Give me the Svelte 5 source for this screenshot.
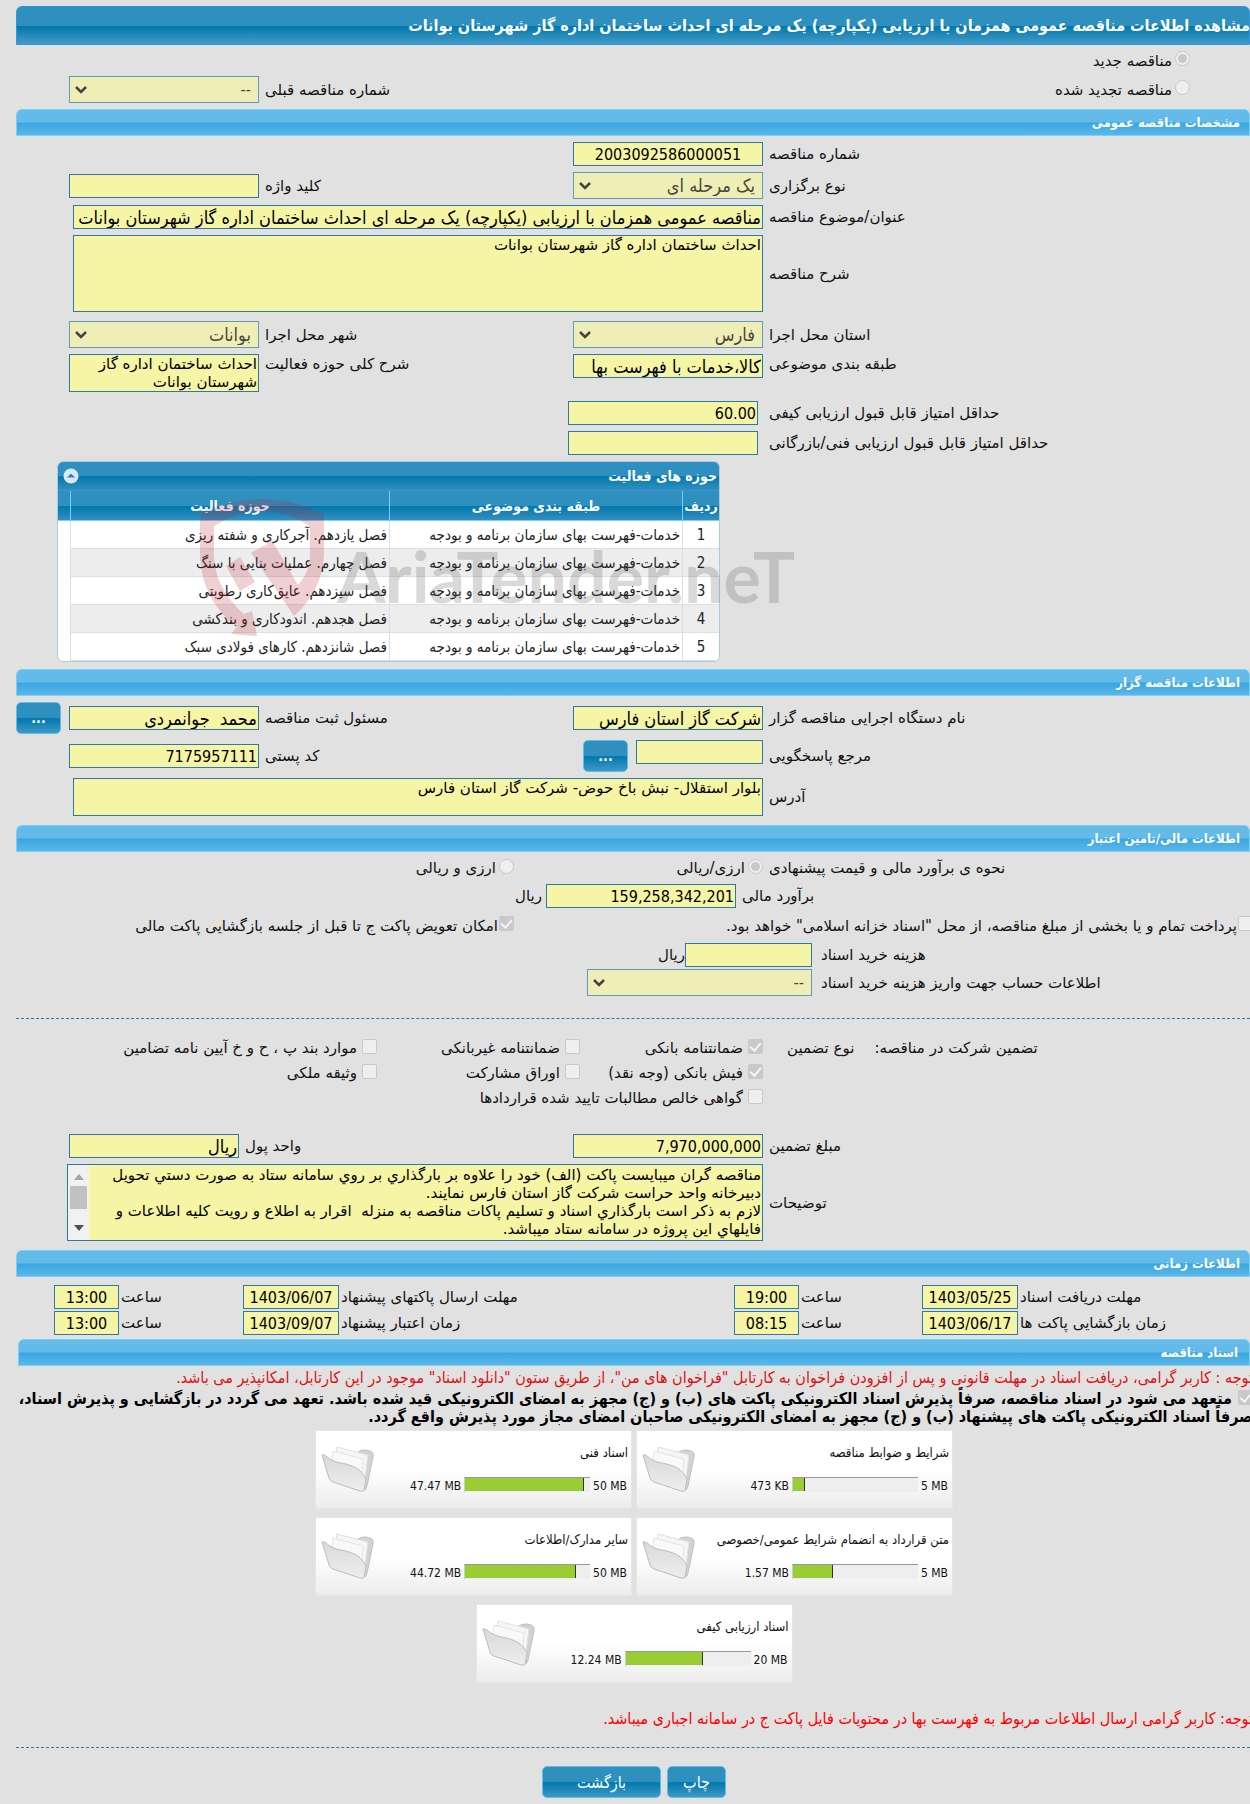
<script>
  let tenderKind = 'new';
  let currencyKind = 'rial';
  let collapsed = false;

  const activities = [
    'فصل یازدهم. آجرکاری و شفته ریزی',
    'فصل چهارم. عملیات بنایی با سنگ',
    'فصل سیزدهم. عایق‌کاری رطوبتی',
    'فصل هجدهم. اندودکاری و بندکشی',
    'فصل شانزدهم. کارهای فولادی سبک'
  ];

  const times = [
    {
      id: 'docs', label: 'مهلت دریافت اسناد', date: '1403/05/25', time: '19:00',
      id2: 'send', label2: 'مهلت ارسال پاکتهای پیشنهاد', date2: '1403/06/07', time2: '13:00'
    },
    {
      id: 'open', label: 'زمان بازگشایی پاکت ها', date: '1403/06/17', time: '08:15',
      id2: 'valid', label2: 'زمان اعتبار پیشنهاد', date2: '1403/09/07', time2: '13:00'
    }
  ];

  const guarantees = [
    { label: 'ضمانتنامه بانکی', checked: true },
    { label: 'ضمانتنامه غیربانکی', checked: false },
    { label: 'موارد بند پ ، ح و خ آیین نامه تضامین', checked: false },
    { label: 'فیش بانکی (وجه نقد)', checked: true },
    { label: 'اوراق مشارکت', checked: false },
    { label: 'وثیقه ملکی', checked: false },
    { label: 'گواهی خالص مطالبات تایید شده قراردادها', checked: false, wide: true }
  ];

  const files = [
    { title: 'شرایط و ضوابط مناقصه', max: '5 MB', used: '473 KB', percent: 10 },
    { title: 'اسناد فنی', max: '50 MB', used: '47.47 MB', percent: 95 },
    { title: 'متن قرارداد به انضمام شرایط عمومی/خصوصی', max: '5 MB', used: '1.57 MB', percent: 32 },
    { title: 'سایر مدارک/اطلاعات', max: '50 MB', used: '44.72 MB', percent: 89 },
    { title: 'اسناد ارزیابی کیفی', max: '20 MB', used: '12.24 MB', percent: 62 }
  ];

  const description = 'احداث ساختمان اداره گاز شهرستان بوانات';
  const address = 'بلوار استقلال- نبش باخ حوض- شرکت گاز استان فارس';
  const notes = `مناقصه گران میبایست پاکت (الف) خود را علاوه بر بارگذاري بر روي سامانه ستاد به صورت دستي تحویل دبیرخانه واحد حراست شرکت گاز استان فارس نمایند.
لازم به ذکر است بارگذاري اسناد و تسلیم پاکات مناقصه به منزله  اقرار به اطلاع و رویت کلیه اطلاعات و فایلهاي این پروژه در سامانه ستاد میباشد.`;
</script>

<div class="page" dir="rtl">
  <h1 class="title-bar"><span>مشاهده اطلاعات مناقصه عمومی همزمان با ارزیابی (یکپارچه) یک مرحله ای احداث ساختمان اداره گاز شهرستان بوانات</span></h1>

  <section class="body">
    <div class="row kind">
      <label class="option"><input type="radio" value="new" bind:group={tenderKind} disabled />مناقصه جدید</label>
    </div>
    <div class="row cols">
      <div class="kind">
        <label class="option"><input type="radio" value="renewed" bind:group={tenderKind} disabled />مناقصه تجدید شده</label>
      </div>
      <label class="lbl" for="prev-number">شماره مناقصه قبلی</label>
      <div><select id="prev-number" class="field" disabled><option>--</option></select></div>
    </div>
  </section>

  <h2 class="section-bar">مشخصات مناقصه عمومی</h2>
  <section class="body">
    <div class="row cols">
      <label class="lbl" for="number">شماره مناقصه</label>
      <div><input id="number" class="field center" value="2003092586000051" readonly /></div>
    </div>
    <div class="row cols">
      <label class="lbl" for="stage">نوع برگزاری</label>
      <div class="pair">
        <select id="stage" class="field persian" disabled><option>یک مرحله ای</option></select>
        <label class="lbl" for="keyword">کلید واژه</label>
      </div>
      <div><input id="keyword" class="field" readonly /></div>
    </div>
    <div class="row cols">
      <label class="lbl" for="subject">عنوان/موضوع مناقصه</label>
      <div class="wide"><input id="subject" class="field full persian" value="مناقصه عمومی همزمان با ارزیابی (یکپارچه) یک مرحله ای احداث ساختمان اداره گاز شهرستان بوانات" readonly /></div>
    </div>
    <div class="row cols after">
      <label class="lbl" for="description">شرح مناقصه</label>
      <div class="wide"><textarea id="description" class="field full tall" value={description} readonly></textarea></div>
    </div>
    <div class="row cols">
      <label class="lbl" for="province">استان محل اجرا</label>
      <div class="pair">
        <select id="province" class="field persian" disabled><option>فارس</option></select>
        <label class="lbl" for="city">شهر محل اجرا</label>
      </div>
      <div><select id="city" class="field persian" disabled><option>بوانات</option></select></div>
    </div>
    <div class="row cols top after">
      <label class="lbl" for="category">طبقه بندی موضوعی</label>
      <div class="pair">
        <input id="category" class="field persian" value="کالا،خدمات با فهرست بها" readonly />
        <label class="lbl" for="activity">شرح کلی حوزه فعالیت</label>
      </div>
      <div><textarea id="activity" class="field short" value={description} readonly></textarea></div>
    </div>
    <div class="row cols score">
      <label class="lbl" for="quality">حداقل امتیاز قابل قبول ارزیابی کیفی</label>
      <div><input id="quality" class="field" value="60.00" readonly /></div>
    </div>
    <div class="row cols score">
      <label class="lbl" for="technical">حداقل امتیاز قابل قبول ارزیابی فنی/بازرگانی</label>
      <div><input id="technical" class="field" readonly /></div>
    </div>

    <div class="grid-box">
      <div class="grid-title">
        <span>حوزه های فعالیت</span>
        <button class="collapse" aria-label="حوزه های فعالیت" on:click={() => (collapsed = !collapsed)}>
          <svg viewBox="0 0 16 16"><circle cx="8" cy="8" r="7.5" fill="#d9e8f5" /><path d="M4 9.5 8 5.5 12 9.5z" fill="#2a7fb5" /></svg>
        </button>
      </div>
      {#if !collapsed}
        <table>
          <thead>
            <tr><th class="num">ردیف</th><th>طبقه بندی موضوعی</th><th class="act">حوزه فعالیت</th><th class="rest"></th></tr>
          </thead>
          <tbody>
            {#each activities as activity, i}
              <tr>
                <td class="num">{i + 1}</td>
                <td>خدمات-فهرست بهای سازمان برنامه و بودجه</td>
                <td>{activity}</td>
                <td class="rest"></td>
              </tr>
            {/each}
          </tbody>
        </table>
      {/if}
      <!-- Watermark over the grid -->
      <svg class="watermark" viewBox="0 0 610 150" aria-hidden="true">
        <g fill="rgba(190, 32, 48, 0.21)">
          <path d="M0 14Q62 -16 124 14V52C124 78 112 100 94 116L51 53 65 45 69 51 66 46 70 37 98 85C106 76 110 66 110 54V26Q62 -4 14 26V54C14 78 26 98 44 114L52 111 57 136 31 134 37 127C14 110 0 84 0 52Z" />
          <path d="M26 66 40 57 55 82 40 91Z" />
        </g>
        <text x="137" y="103">AriaTender.neT</text>
      </svg>
    </div>
  </section>

  <h2 class="section-bar">اطلاعات مناقصه گزار</h2>
  <section class="body">
    <div class="row cols">
      <label class="lbl" for="agency">نام دستگاه اجرایی مناقصه گزار</label>
      <div class="pair">
        <input id="agency" class="field persian" value="شرکت گاز استان فارس" readonly />
        <label class="lbl" for="registrar">مسئول ثبت مناقصه</label>
      </div>
      <div class="with-button">
        <input id="registrar" class="field persian" value="محمد  جوانمردی" readonly />
        <button class="btn dots">...</button>
      </div>
    </div>
    <div class="row cols">
      <label class="lbl" for="contact">مرجع پاسخگویی</label>
      <div class="pair">
        <div class="with-button top">
          <input id="contact" class="field small" readonly />
          <button class="btn dots">...</button>
        </div>
        <label class="lbl" for="postal">کد پستی</label>
      </div>
      <div><input id="postal" class="field" value="7175957111" readonly /></div>
    </div>
    <div class="row cols after">
      <label class="lbl" for="address">آدرس</label>
      <div class="wide"><textarea id="address" class="field full short" value={address} readonly></textarea></div>
    </div>
  </section>

  <h2 class="section-bar">اطلاعات مالی/تامین اعتبار</h2>
  <section class="body">
    <div class="row cols line">
      <span class="lbl">نحوه ی برآورد مالی و قیمت پیشنهادی</span>
      <div class="halves">
        <label class="option"><input type="radio" value="rial" bind:group={currencyKind} disabled />ارزی/ریالی</label>
        <label class="option"><input type="radio" value="both" bind:group={currencyKind} disabled />ارزی و ریالی</label>
      </div>
    </div>
    <div class="row estimate">
      <label class="lbl" for="estimate">برآورد مالی</label>
      <div class="with-unit gap"><input id="estimate" class="field" value="159,258,342,201" readonly /><span>ریال</span></div>
    </div>
    <div class="row payment line">
      <label class="option bleed"><input type="checkbox" disabled />پرداخت تمام و یا بخشی از مبلغ مناقصه، از محل "اسناد خزانه اسلامی" خواهد بود.</label>
      <label class="option"><input type="checkbox" checked disabled />امکان تعویض پاکت ج تا قبل از جلسه بازگشایی پاکت مالی</label>
    </div>
    <div class="row cost tight">
      <label class="lbl" for="cost">هزینه خرید اسناد</label>
      <div class="with-unit"><input id="cost" class="field small" readonly /><span>ریال</span></div>
    </div>
    <div class="row cost">
      <label class="lbl" for="account">اطلاعات حساب جهت واریز هزینه خرید اسناد</label>
      <div><select id="account" class="field large" disabled><option>--</option></select></div>
    </div>
    <hr />
    <div class="row cols top guarantee">
      <div class="lbl captions"><span>تضمین شرکت در مناقصه:</span><span>نوع تضمین</span></div>
      <div class="checks">
        {#each guarantees as item}
          <label class="option spaced" class:span={item.wide}><input type="checkbox" checked={item.checked} disabled />{item.label}</label>
        {/each}
      </div>
    </div>
    <div class="row cols">
      <label class="lbl" for="guarantee">مبلغ تضمین</label>
      <div class="pair unit-pair">
        <input id="guarantee" class="field" value="7,970,000,000" readonly />
        <div class="money"><label class="lbl" for="unit">واحد پول</label><input id="unit" class="field unit persian" value="ریال" readonly /></div>
      </div>
    </div>
    <div class="row cols after">
      <label class="lbl" for="notes">توضیحات</label>
      <div class="notes">
        <textarea id="notes" value={notes} readonly></textarea>
        <div class="scrollbar">
          <svg viewBox="0 0 10 6"><path d="M0 6 5 0 10 6z" fill="#a3a3a3" /></svg>
          <div class="thumb"></div>
          <svg viewBox="0 0 10 6"><path d="M0 0 5 6 10 0z" fill="#505050" /></svg>
        </div>
      </div>
    </div>
  </section>

  <h2 class="section-bar">اطلاعات زمانی</h2>
  <section class="body times">
    {#each times as t}
      <div class="time-row">
        <label class="lbl" for="{t.id}-date">{t.label}</label>
        <div class="pair"><input id="{t.id}-date" class="field date" value={t.date} readonly /><label class="lbl" for="{t.id}-time">ساعت</label></div>
        <div class="pair"><input id="{t.id}-time" class="field time" value={t.time} readonly /><label class="lbl" for="{t.id2}-date">{t.label2}</label></div>
        <div class="pair"><input id="{t.id2}-date" class="field date" value={t.date2} readonly /><label class="lbl" for="{t.id2}-time">ساعت</label></div>
        <input id="{t.id2}-time" class="field time" value={t.time2} readonly />
      </div>
    {/each}
  </section>

  <h2 class="section-bar docs">اسناد مناقصه</h2>
  <section class="documents">
    <p class="warn dark bleed">توجه : کاربر گرامی، دریافت اسناد در مهلت قانونی و پس از افزودن فراخوان به کارتابل "فراخوان های من"، از طریق ستون "دانلود اسناد" موجود در این کارتابل، امکانپذیر می باشد.</p>
    <label class="commit bleed"><input type="checkbox" checked disabled /> متعهد می شود در اسناد مناقصه، صرفاً پذیرش اسناد الکترونیکی پاکت های (ب) و (ج) مجهز به امضای الکترونیکی قید شده باشد. تعهد می گردد در بازگشایی و پذیرش اسناد، صرفاً اسناد الکترونیکی پاکت های پیشنهاد (ب) و (ج) مجهز به امضای الکترونیکی صاحبان امضای مجاز مورد پذیرش واقع گردد.</label>

    <div class="files">
      {#each files as file}
        <div class="card">
          <a href="#top">{file.title}</a>
          <div class="usage">
            <span dir="ltr">{file.max}</span>
            <div class="bar" dir="ltr"><div class="fill" style="width: {file.percent}%"></div></div>
            <span dir="ltr">{file.used}</span>
          </div>
          <svg class="folder" viewBox="0 0 54 48">
            <defs>
              <linearGradient id="front" x1="0" y1="0" x2="0" y2="1">
                <stop offset="0" stop-color="#d9d9d9" />
                <stop offset="1" stop-color="#eeeeee" />
              </linearGradient>
            </defs>
            <path d="M34 8Q40 3 45 4L49 5Q53 6 52 11L46 40Q45 45 42 44L34 30Z" fill="#d2d2d2" stroke="#c2c2c2" />
            <path d="M16 1 L47 9 43 40 12 26Z" fill="#f6f6f6" stroke="#e0e0e0" />
            <path d="M12 5 L42 13 40 38 10 26Z" fill="#f9f9f9" stroke="#e4e4e4" />
            <path d="M1 9Q2 8 5 10C14 18 20 16 28 19C38 22 42 27 45 33L43 44Q43 46 39 45L12 36Q9 35 8 32Z" fill="url(#front)" stroke="#bcbcbc" />
          </svg>
        </div>
      {/each}
    </div>

    <p class="warn bleed">توجه: کاربر گرامی ارسال اطلاعات مربوط به فهرست بها در محتویات فایل پاکت ج در سامانه اجباری میباشد.</p>
  </section>

  <hr class="last" />
  <div class="actions">
    <button class="btn">چاپ</button>
    <button class="btn back">بازگشت</button>
  </div>
</div>

<style>
  :global(body) {
    background: #e1e1e1;
  }

  .page {
    --narrow: "DejaVu Sans Condensed", "DejaVu Sans", sans-serif;
    overflow: hidden;
    padding: 6px 0;
    color: #111;
    font-family: "DejaVu Sans", sans-serif;
    font-size: 15px;
    line-height: 18px;
  }

  .page * {
    box-sizing: border-box;
  }

  h1,
  h2,
  p {
    margin: 0;
  }

  .title-bar {
    display: flex;
    align-items: center;
    height: 39px;
    margin-left: 16px;
    border: 1px solid #2e97e6;
    border-radius: 6px 6px 0 0;
    background: linear-gradient(#2f90bf 50%, #0078ae 52%, #439bc6);
    color: #fff;
    font-family: var(--narrow);
    font-size: 16px;
    white-space: nowrap;
  }

  .title-bar span {
    margin-right: -1px;
  }

  .section-bar {
    height: 27px;
    margin-left: 16px;
    padding: 0 9px;
    border: 1px solid #74d2f7;
    border-radius: 6px 6px 0 0;
    background: linear-gradient(#64bae9 48%, #37a7e1 52%, #5cb7e8);
    color: #fff;
    font-family: var(--narrow);
    font-size: 13px;
    line-height: 25px;
  }

  .section-bar.docs {
    margin-left: 18px;
    padding-right: 11px;
  }

  .body {
    display: flex;
    flex-direction: column;
    padding: 6px 0 0;
  }

  .row {
    margin-bottom: 6px;
  }

  .row.after {
    margin-bottom: 9px;
  }

  .row.tight {
    margin-bottom: 2px;
  }

  .cols,
  .estimate,
  .payment,
  .cost {
    display: grid;
    align-items: center;
  }

  .cols {
    grid-template-columns: 487fr 504fr 259fr;
  }

  .top {
    align-items: flex-start;
  }

  .lbl {
    padding-left: 6px;
    text-align: left;
    white-space: nowrap;
  }

  .top > .lbl,
  .top > .pair > .lbl {
    padding-top: 1px;
  }

  .kind {
    padding-right: 60px;
  }

  .pair {
    display: flex;
    align-items: center;
    justify-content: space-between;
  }

  .top > .pair {
    align-items: flex-start;
  }

  .wide {
    grid-column: 2 / 4;
    padding-left: 73px;
  }

  .field {
    display: block;
    width: 190px;
    height: 24px;
    margin: 0;
    padding: 0 1px;
    border: 1px solid #2a7bab;
    border-radius: 0;
    background-color: #f6f4a5;
    color: #000;
    font-family: var(--narrow);
    font-size: 16px;
    outline: none;
  }

  .field.persian {
    font-size: 18px;
  }

  select.field {
    height: 27px;
    padding: 0 7px;
    border-color: #609cba;
    background: #efeeb6 url("data:image/svg+xml,%3Csvg xmlns='http://www.w3.org/2000/svg' width='12' height='8'%3E%3Cpath d='M1 1l5 5 5-5' fill='none' stroke='%23444' stroke-width='2.5'/%3E%3C/svg%3E") no-repeat 5px center;
    color: #48483c;
    opacity: 1;
    appearance: none;
  }

  textarea {
    resize: none;
  }

  textarea.field {
    font-family: inherit;
    font-size: 15px;
    line-height: 18px;
    overflow: hidden;
  }

  .field.full {
    width: 100%;
  }

  .field.tall {
    height: 77px;
  }

  .field.short {
    height: 38px;
  }

  .field.small {
    width: 127px;
  }

  .field.large {
    width: 225px;
  }

  .field.unit {
    width: 170px;
  }

  .center,
  .date,
  .time {
    text-align: center;
  }

  .field.date {
    width: 96px;
    padding: 0;
  }

  .field.time {
    width: 65px;
  }

  .score {
    grid-template-columns: 492fr 758fr;
  }

  .score .lbl {
    padding-left: 11px;
  }

  .option {
    display: flex;
    align-items: center;
    white-space: nowrap;
  }

  .option.spaced {
    gap: 4px;
  }

  input[type="radio"],
  input[type="checkbox"] {
    display: inline-grid;
    place-content: center;
    flex: none;
    width: 15px;
    height: 15px;
    margin: 0 0 4px 1px;
    border: 1px solid #c9c9c9;
    border-radius: 2px;
    background: #efefef;
    appearance: none;
  }

  input[type="radio"] {
    border-radius: 50%;
    margin-left: 3px;
  }

  input[type="radio"]:checked::before {
    content: "";
    width: 9px;
    height: 9px;
    border-radius: 50%;
    background: #c9c9c9;
  }

  input[type="checkbox"]:checked {
    background: #c9c9c9;
  }

  input[type="checkbox"]:checked::before {
    content: "";
    width: 5px;
    height: 9px;
    margin-bottom: 2px;
    border: solid #f4f4f4;
    border-width: 0 2px 2px 0;
    transform: rotate(40deg);
  }

  .grid-box {
    position: relative;
    align-self: flex-end;
    width: 663px;
    margin: 0 0 7px 57px;
    border: 1px solid #a9cbe4;
    border-radius: 6px;
    background: #fff;
    font-family: var(--narrow);
  }

  .grid-title {
    display: flex;
    align-items: center;
    justify-content: space-between;
    height: 29px;
    padding: 0 2px 0 5px;
    border-bottom: 1px solid #3d92d6;
    border-radius: 5px 5px 0 0;
    background: linear-gradient(#2f90bf 50%, #0078ae 52%, #348fc0);
    color: #fff;
    font-size: 14px;
    font-weight: bold;
  }

  .collapse {
    width: 16px;
    height: 16px;
    padding: 0;
    border: 0;
    background: none;
  }

  .collapse svg {
    display: block;
  }

  table {
    width: 100%;
    border-collapse: separate;
    border-spacing: 0;
    table-layout: fixed;
  }

  th {
    height: 30px;
    padding: 0;
    border-left: 1px solid #74d2f7;
    border-bottom: 1px solid #74d2f7;
    background: linear-gradient(#2f90bf 50%, #0078ae 52%, #348fc0);
    color: #fff;
    font-size: 14px;
    text-align: center;
  }

  th.num {
    width: 37px;
  }

  th.act {
    width: 319px;
  }

  th.rest {
    width: 12px;
    border-left: 0;
  }

  td {
    height: 28px;
    padding: 0 2px;
    border-left: 1px solid #dedede;
    border-bottom: 1px solid #dedede;
    color: #222;
    font-size: 15px;
    white-space: nowrap;
  }

  tbody tr:nth-child(even) td {
    background: #ededed;
  }

  td.num {
    text-align: center;
  }

  tbody tr:nth-child(n) td.rest {
    border: 0;
    background: #fff;
  }

  tbody tr:last-child td.rest {
    border-radius: 0 0 0 6px;
  }

  .watermark {
    position: absolute;
    left: 142px;
    top: 38px;
    width: 610px;
    height: 150px;
    overflow: visible;
    pointer-events: none;
  }

  .watermark text {
    direction: ltr;
    fill: rgba(80, 80, 80, 0.22);
    font-family: Lato, "Liberation Sans", sans-serif;
    font-size: 70px;
    font-weight: bold;
  }

  .with-button {
    display: flex;
    align-items: center;
    gap: 8px;
  }

  .with-button.top {
    align-items: flex-start;
  }

  .btn {
    height: 32px;
    padding: 0;
    border: 1px solid #5dbfe9;
    border-radius: 5px;
    background: linear-gradient(#2f90bf 50%, #0078ae 52%, #3f99c5);
    color: #fff;
    font-family: var(--narrow);
    font-size: 16px;
  }

  .btn.dots {
    width: 45px;
    font-size: 14px;
    font-weight: bold;
  }

  .line {
    min-height: 20px;
  }

  .halves {
    display: grid;
    grid-template-columns: 249fr 255fr;
  }

  .estimate {
    grid-template-columns: 514fr 736fr;
  }

  .with-unit {
    display: flex;
    align-items: center;
  }

  .with-unit.gap {
    gap: 4px;
  }

  .payment {
    grid-template-columns: 736fr 514fr;
    min-height: 23px;
  }

  .cost {
    grid-template-columns: 438fr 812fr;
  }

  .cost .lbl {
    padding-left: 9px;
  }

  .bleed {
    margin-right: -3px;
  }

  hr {
    height: 0;
    margin: 16px 0 19px 16px;
    border: 0;
    border-top: 1px dashed #2a7bab;
  }

  .row.guarantee {
    margin-bottom: 26px;
  }

  .captions {
    display: flex;
    justify-content: flex-end;
    gap: 20px;
  }

  .guarantee > .captions {
    padding-left: 24px;
  }

  .checks {
    display: grid;
    grid-column: 2 / 4;
    grid-template-columns: 183fr 203fr 377fr;
    grid-auto-rows: 20px;
    row-gap: 5px;
  }

  .span {
    grid-column: 1 / 4;
  }

  .unit-pair {
    grid-column: 2 / 4;
    padding-left: 69px;
  }

  .money {
    display: flex;
    align-items: center;
  }

  .notes {
    display: flex;
    grid-column: 2 / 4;
    height: 77px;
    margin-left: 67px;
    border: 1px solid #2a7bab;
    background: #f6f4a5;
  }

  .notes textarea {
    flex: 1;
    padding: 1px;
    border: 0;
    background: none;
    color: #000;
    font-family: inherit;
    font-size: 15px;
    line-height: 18px;
    overflow: hidden;
  }

  .scrollbar {
    display: flex;
    flex-direction: column;
    align-items: center;
    width: 21px;
    padding: 9px 0;
    background: #f1f1f1;
  }

  .scrollbar svg {
    width: 10px;
    height: 6px;
  }

  .thumb {
    width: 17px;
    height: 23px;
    margin: 6px 0 auto;
    background: #c1c1c1;
  }

  .times {
    gap: 2px;
    padding: 8px 0 4px;
  }

  .time-row {
    display: grid;
    grid-template-columns: 232fr 219fr 460fr 220fr 119fr;
    align-items: center;
  }

  .time-row .lbl {
    padding-left: 2px;
  }

  .documents {
    padding-top: 3px;
    font-family: var(--narrow);
    font-size: 16px;
  }

  .warn {
    color: #f00;
    white-space: nowrap;
  }

  .warn.dark {
    color: #dc1414;
  }

  .commit {
    display: block;
    margin-top: 3px;
    padding-left: 16px;
    color: #000;
    font-weight: bold;
  }

  .commit input[type="checkbox"] {
    margin-bottom: 0;
    vertical-align: top;
  }

  .files {
    display: flex;
    flex-wrap: wrap;
    justify-content: center;
    gap: 8px 4px;
    padding: 4px 0 27px 18px;
    margin: 0 auto;
    max-width: 678px;
  }

  .card {
    display: grid;
    grid-template-columns: 1fr 54px;
    grid-template-rows: 44px 1fr;
    width: 317px;
    height: 79px;
    padding: 0 3px 0 5px;
    border: 1px solid #e6e6e6;
    background: linear-gradient(#fff 50%, #ececec);
    font-size: 12px;
  }

  .card a {
    align-self: center;
    color: #111;
    font-size: 13px;
    text-decoration: none;
    white-space: nowrap;
  }

  .usage {
    display: flex;
    grid-row: 2;
    align-items: flex-start;
    gap: 3px;
    padding: 2px 1px 0 0;
  }

  .bar {
    width: 126px;
    height: 15px;
    border-top: 1px solid #999;
    border-left: 1px solid #ccc;
    background: #eee;
  }

  .fill {
    height: 13px;
    border-right: 1px solid #333;
    background: #9acc33;
  }

  .folder {
    grid-row: 1 / 3;
    grid-column: 2;
    width: 54px;
    height: 48px;
    margin-top: 15px;
  }

  hr.last {
    margin: 19px 0 18px 16px;
  }

  .actions {
    display: flex;
    justify-content: center;
    gap: 6px;
    padding-left: 18px;
  }

  .actions .btn {
    width: 59px;
  }

  .actions .back {
    width: 119px;
  }
</style>
